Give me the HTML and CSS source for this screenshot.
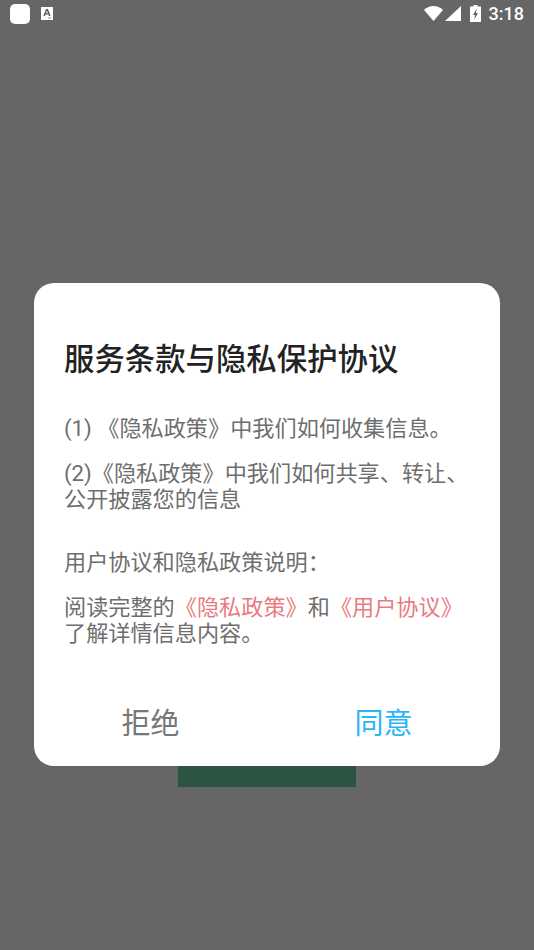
FILE: index.html
```html
<!DOCTYPE html>
<html lang="zh-CN">
<head>
    <meta charset="UTF-8">
    <meta name="viewport" content="width=device-width, initial-scale=1.0">
    <title>服务条款与隐私保护协议</title>
    <link rel="stylesheet" href="styles.css">
</head>

<body>
    <div class="screen">
        <div class="pageBehind">
            <div class="greenBtn"></div>
        </div>

        <div class="overlay">
            <nav class="statusBar">
                <div class="statusLeft">
                    <span class="appIcon"></span>
                    <svg class="noticeIcon" viewBox="0 0 12 13" width="12" height="13">
                        <rect width="12" height="13" fill="#fff"/>
                        <path d="M2.4 9 L5.1 2 H6.9 L9.6 9 H8 L7.5 7.5 H4.5 L4 9 Z M5 6.2 H7 L6 3.5 Z" fill="#555" fill-rule="evenodd"/>
                        <rect x="7" y="10.4" width="3.4" height="1" fill="#999"/>
                    </svg>
                </div>
                <div class="statusRight">
                    <svg class="wifiIcon" viewBox="0 0 19 15" width="19" height="15">
                        <path d="M0 4 C5.2 -1.2 13.8 -1.2 19 4 L9.5 15 Z" fill="#fff"/>
                    </svg>
                    <svg class="signalIcon" viewBox="0 0 16 15" width="16" height="15">
                        <path d="M16 0 V15 H0 Z" fill="#fff"/>
                    </svg>
                    <svg class="batteryIcon" viewBox="0 0 11 17" width="11" height="17">
                        <path d="M3.5 0 H7.5 V1.5 H11 V17 H0 V1.5 H3.5 Z" fill="#fff"/>
                        <path d="M6.6 3.5 L3 10 H5 L4.4 14.5 L8 8 H6 Z" fill="#666"/>
                    </svg>
                    <span class="clock">3:18</span>
                </div>
            </nav>

            <div class="dialog">
                <h2 class="dialogTitle">服务条款与隐私保护协议</h2>
                <p class="para first">(1) 《隐私政策》中我们如何收集信息。</p>
                <p class="para second">(2)《隐私政策》中我们如何共享、转让、公开披露您的信息</p>
                <p class="para third">用户协议和隐私政策说明：</p>
                <p class="para fourth">阅读完整的<span class="link">《隐私政策》</span>和<span class="link">《用户协议》</span>了解详情信息内容。</p>
                <div class="dialogBtns">
                    <button class="refuseBtn">拒绝</button>
                    <button class="agreeBtn">同意</button>
                </div>
            </div>
        </div>
    </div>
</body>
</html>
```

FILE: styles.css
```css
html, body {
    margin: 0;
    padding: 0;
}
body {
    font-family: "Roboto", "Noto Sans CJK SC", sans-serif;
}
.screen {
    position: relative;
    width: 534px;
    height: 950px;
    overflow: hidden;
    background: #fff;
}
.pageBehind {
    display: flex;
    justify-content: center;
    padding-top: 720px;
}
.greenBtn {
    width: 178px;
    height: 67px;
    background: #6bd4a0;
}
.overlay {
    position: absolute;
    top: 0;
    left: 0;
    right: 0;
    bottom: 0;
    background: rgba(0, 0, 0, 0.6);
}
.statusBar {
    height: 27px;
    display: flex;
    justify-content: space-between;
    align-items: center;
    padding: 0 10px;
}
.statusLeft {
    display: flex;
    align-items: center;
    gap: 11px;
}
.appIcon {
    width: 20px;
    height: 20px;
    border-radius: 5px;
    background: #fff;
}
.statusRight {
    display: flex;
    align-items: center;
}
.wifiIcon {
    margin-right: 2px;
}
.signalIcon {
    margin-right: 9px;
}
.batteryIcon {
    margin-right: 8px;
}
.clock {
    color: #fff;
    font-size: 18px;
    font-weight: 500;
}
.dialog {
    width: 466px;
    height: 483px;
    box-sizing: border-box;
    margin: 256px 0 0 34px;
    padding: 59px 30px 0;
    background: #fff;
    border-radius: 20px;
    display: flex;
    flex-direction: column;
}
.dialogTitle {
    margin: 0;
    font-size: 30.4px;
    line-height: 36px;
    font-weight: 500;
    color: #222;
}
.para {
    margin: 0;
    font-size: 22.17px;
    line-height: 26px;
    color: #6e6e6e;
}
.first {
    margin-top: 37px;
}
.second {
    margin-top: 19px;
}
.third {
    margin-top: 37px;
}
.fourth {
    margin-top: 19px;
}
.link {
    color: #e97a80;
}
.dialogBtns {
    display: flex;
    margin: 60px -30px 0;
}
.dialogBtns button {
    flex: 1;
    border: none;
    background: none;
    padding: 0;
    font-family: inherit;
    font-size: 29px;
    line-height: 36px;
}
.refuseBtn {
    color: #777;
}
.agreeBtn {
    color: #29b6f6;
}
```
